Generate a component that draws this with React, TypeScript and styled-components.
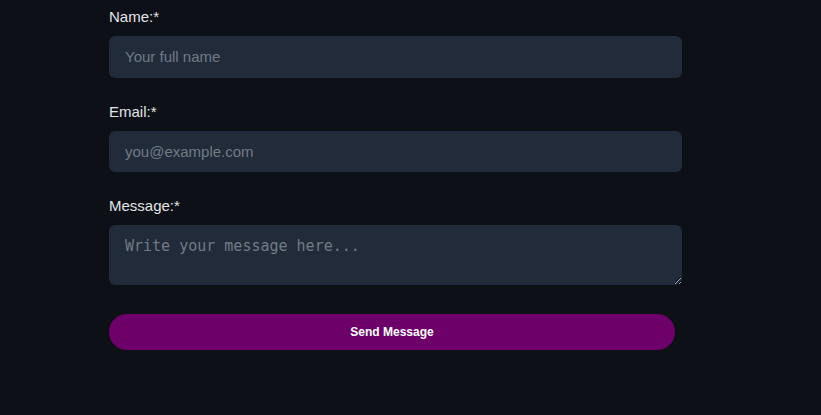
import React from 'react';
import styled, {createGlobalStyle} from 'styled-components';

const GlobalStyle = createGlobalStyle`
  html, body {
    margin: 0;
    padding: 0;
    background: #0d1017;
  }
  body {
    font-family: "Liberation Sans", Arial, sans-serif;
  }
`

const Page = styled.div`
  min-height: 415px;
  padding: 7px 0 0 109px;
  box-sizing: border-box;
`

const Form = styled.form`
  width: 573px;
  display: flex;
  flex-direction: column;
`

const Field = styled.div`
  display: flex;
  flex-direction: column;
  margin-bottom: 24px;
`

const Label = styled.label`
  display: block;
  font-size: 15px;
  line-height: 20px;
  color: #e2e4e8;
  margin-bottom: 9px;
`

const Input = styled.input`
  box-sizing: border-box;
  height: 41.5px;
  width: 100%;
  padding: 0 16px;
  border: none;
  border-radius: 6px;
  background: #212b3a;
  color: #e5e7eb;
  font-family: "Liberation Sans", Arial, sans-serif;
  font-size: 15px;
  outline: none;

  &::placeholder {
    color: #737a85;
  }
`

const TextArea = styled.textarea`
  box-sizing: border-box;
  height: 60px;
  width: 100%;
  padding: 12px 16px;
  border: none;
  border-radius: 6px;
  background: #212b3a;
  color: #e5e7eb;
  font-family: "DejaVu Sans Mono", monospace;
  font-size: 15px;
  outline: none;

  &::placeholder {
    color: #737a85;
  }
`

const SendButton = styled.button`
  width: 566px;
  height: 36px;
  margin-top: 5px;
  border: none;
  border-radius: 18px;
  background: #6e006a;
  color: #ffffff;
  font-family: "Liberation Sans", Arial, sans-serif;
  font-size: 12px;
  font-weight: bold;
  cursor: pointer;
`

const App = () => {
    return (
        <Page>
            <GlobalStyle/>
            <Form onSubmit={e => e.preventDefault()}>
                <Field>
                    <Label htmlFor="name">Name:*</Label>
                    <Input id="name" type="text" placeholder="Your full name"/>
                </Field>
                <Field>
                    <Label htmlFor="email">Email:*</Label>
                    <Input id="email" type="email" placeholder="you@example.com"/>
                </Field>
                <Field>
                    <Label htmlFor="message">Message:*</Label>
                    <TextArea id="message" placeholder="Write your message here..."/>
                </Field>
                <SendButton type="submit">Send Message</SendButton>
            </Form>
        </Page>
    );
}

export default App;
